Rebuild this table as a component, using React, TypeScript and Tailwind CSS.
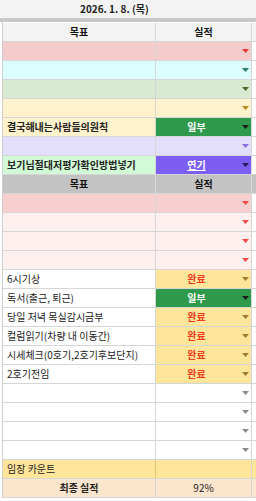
import React from "react";

type RowData = {
  left?: string;
  leftBg: string;
  leftBold?: boolean;
  right?: string;
  rightBg: string;
  rightText?: string;
  underline?: boolean;
  arrow?: string;
};

const Arrow = ({ color }: { color: string }) => (
  <svg width="7" height="4" viewBox="0 0 7 4" className="shrink-0">
    <polygon points="0,0 7,0 3.5,4" fill={color} />
  </svg>
);

const topRows: RowData[] = [
  { leftBg: "bg-[#f4cccc]", rightBg: "bg-[#f4cccc]", arrow: "#e53935" },
  { leftBg: "bg-[#dcfdfd]", rightBg: "bg-[#dcfdfd]", arrow: "#2e7d6b" },
  { leftBg: "bg-[#d9ead3]", rightBg: "bg-[#d9ead3]", arrow: "#4a6b2a" },
  { leftBg: "bg-[#fff2cc]", rightBg: "bg-[#fff2cc]", arrow: "#b58a1e" },
  {
    left: "결국해내는사람들의원칙",
    leftBold: true,
    leftBg: "bg-[#fff2cc]",
    right: "일부",
    rightBg: "bg-[#2f9a4c]",
    rightText: "text-white",
    arrow: "#1b1b1b",
  },
  { leftBg: "bg-[#e3dffb]", rightBg: "bg-[#e3dffb]", arrow: "#8a6fe0" },
  {
    left: "보기님절대저평가확인방법넣기",
    leftBold: true,
    leftBg: "bg-[#d3fad6]",
    right: "연기",
    rightBg: "bg-[#7d5ef2]",
    rightText: "text-white",
    underline: true,
    arrow: "#241a5a",
  },
];

const done = {
  right: "완료",
  rightBg: "bg-[#fde59c]",
  rightText: "text-[#f03a1c]",
  arrow: "#a07c2c",
};

const bottomRows: RowData[] = [
  { leftBg: "bg-[#f8cfcf]", rightBg: "bg-[#f8cfcf]", arrow: "#f04848" },
  { leftBg: "bg-[#fff0f0]", rightBg: "bg-[#fff0f0]", arrow: "#f04848" },
  { leftBg: "bg-[#fff0f0]", rightBg: "bg-[#fff0f0]", arrow: "#f04848" },
  { leftBg: "bg-[#fff0f0]", rightBg: "bg-[#fff0f0]", arrow: "#f04848" },
  { left: "6시기상", leftBg: "bg-white", ...done },
  {
    left: "독서(출근, 퇴근)",
    leftBg: "bg-white",
    right: "일부",
    rightBg: "bg-[#2f9a4c]",
    rightText: "text-white",
    arrow: "#1b1b1b",
  },
  { left: "당일 저녁 목실감시금부", leftBg: "bg-white", ...done },
  { left: "컬럼읽기(차량 내 이동간)", leftBg: "bg-white", ...done },
  { left: "시세체크(0호기,2호기후보단지)", leftBg: "bg-white", ...done },
  { left: "2호기전임", leftBg: "bg-white", ...done },
  { leftBg: "bg-white", rightBg: "bg-white", arrow: "#8a8a8a" },
  { leftBg: "bg-white", rightBg: "bg-white", arrow: "#8a8a8a" },
  { leftBg: "bg-white", rightBg: "bg-white", arrow: "#8a8a8a" },
  { leftBg: "bg-white", rightBg: "bg-white", arrow: "#8a8a8a" },
];

const Row = ({ row }: { row: RowData }) => (
  <div className="flex h-[19px] border-b border-[#d6d6d6]">
    <div
      className={`w-[153px] flex items-center pl-[4px] border-r border-[#d6d6d6] whitespace-nowrap overflow-hidden text-[#222] ${row.leftBg} ${
        row.leftBold ? "font-bold" : ""
      }`}
    >
      {row.left}
    </div>
    <div className={`w-[96px] flex items-center border-r border-[#d6d6d6] ${row.rightBg}`}>
      <div
        className={`flex-1 text-center font-bold ${row.rightText ?? ""} ${
          row.underline ? "underline" : ""
        }`}
      >
        {row.right}
      </div>
      {row.arrow && (
        <div className="w-[14px] flex justify-start pl-[5px]">
          <Arrow color={row.arrow} />
        </div>
      )}
    </div>
  </div>
);

const Header = ({ bg }: { bg: string }) => (
  <div className={`flex h-[19px] border-b border-[#d6d6d6] font-bold text-[#111] ${bg}`}>
    <div className="w-[153px] flex items-center justify-center border-r border-[#d6d6d6]">목표</div>
    <div className="w-[96px] flex items-center justify-center border-r border-[#d6d6d6]">실적</div>
  </div>
);

export default function App() {
  return (
    <div
      className="w-[256px] h-[501px] bg-white overflow-hidden text-[10px] leading-none"
      style={{ fontFamily: '"Noto Sans CJK KR", "Noto Sans", sans-serif' }}
    >
      <div className="h-[18px] bg-[#f3f3f3] flex items-center pl-[80px] font-bold text-[#222]">
        2026. 1. 8. (목)
      </div>
      <div className="h-[4px] bg-[#c8c8c8]" />
      <div className="pl-[2px]">
        <div className="border-l border-[#cfcfcf]">
          <div className="h-[1px]" />
          <Header bg="bg-[#f3f3f3]" />
          {topRows.map((r, i) => (
            <Row key={i} row={r} />
          ))}
          <Header bg="bg-[#c3c3c3]" />
          {bottomRows.map((r, i) => (
            <Row key={i} row={r} />
          ))}
          <div className="flex h-[19px] border-b border-[#d6d6d6] bg-[#ffe599]">
            <div className="w-[153px] flex items-center pl-[4px] border-r border-[#e2c770] text-[#222]">
              임장 카운트
            </div>
            <div className="w-[96px] border-r border-[#d6d6d6]" />
          </div>
          <div className="flex h-[19px] border-b border-[#d6d6d6] bg-[#fce5cd] text-[#222]">
            <div className="w-[153px] flex items-center justify-center font-bold border-r border-[#d6d6d6]">
              최종 실적
            </div>
            <div className="w-[96px] flex items-center justify-center border-r border-[#d6d6d6]">92%</div>
          </div>
        </div>
      </div>
    </div>
  );
}
